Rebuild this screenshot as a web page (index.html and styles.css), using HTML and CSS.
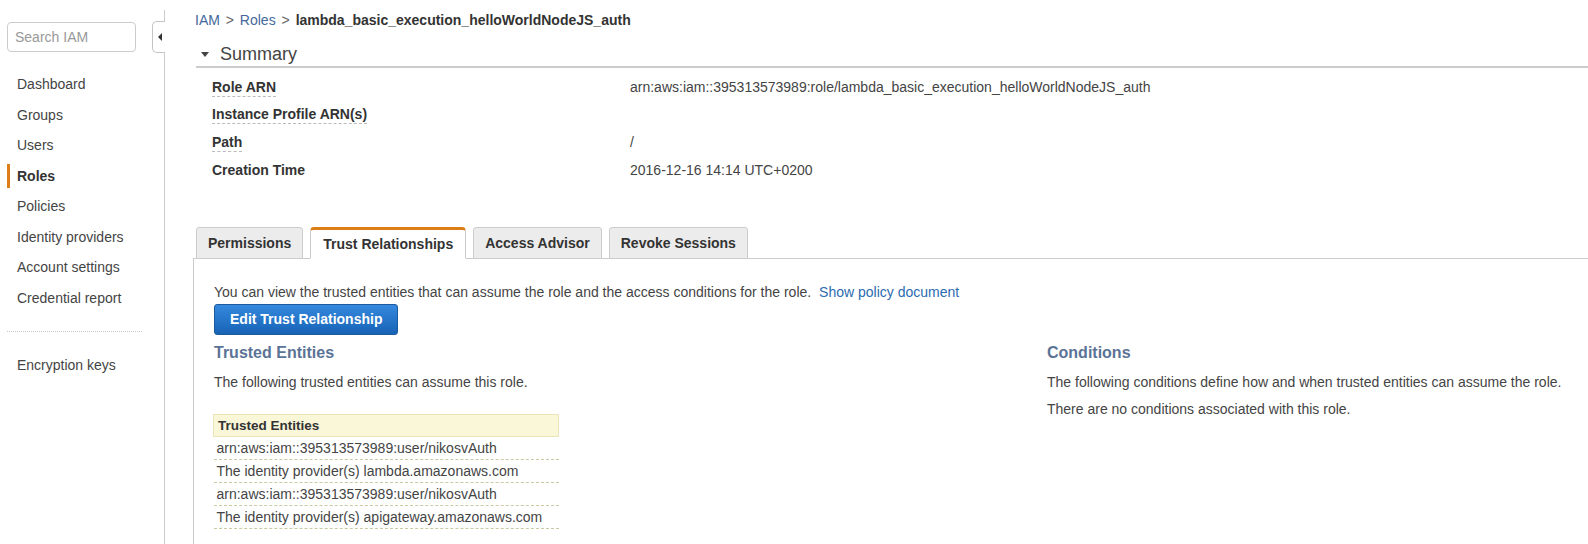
FILE: index.html
```html
<!DOCTYPE html>
<html lang="en">
<head>
    <meta charset="UTF-8">
    <title>IAM - Roles</title>
    <link rel="stylesheet" href="styles.css">
</head>
<body>

    <!-- left navigation -->
    <aside class="sidebar">
        <div class="collapse-tab"><span class="arrow"></span></div>
        <input class="search" type="text" placeholder="Search IAM">
        <ul class="nav">
            <li>Dashboard</li>
            <li>Groups</li>
            <li>Users</li>
            <li class="active">Roles</li>
            <li>Policies</li>
            <li>Identity providers</li>
            <li>Account settings</li>
            <li>Credential report</li>
        </ul>
        <div class="nav-sep"></div>
        <ul class="nav">
            <li>Encryption keys</li>
        </ul>
    </aside>

    <main class="main">
        <div class="crumbs">
            <a href="#">IAM</a> <span class="sep">&gt;</span> <a href="#">Roles</a> <span class="sep">&gt;</span>
            <b>lambda_basic_execution_helloWorldNodeJS_auth</b>
        </div>

        <h2 class="summary-title"><span class="caret"></span>Summary</h2>

        <dl class="summary">
            <dt><span>Role ARN</span></dt>
            <dd>arn:aws:iam::395313573989:role/lambda_basic_execution_helloWorldNodeJS_auth</dd>
            <dt><span>Instance Profile ARN(s)</span></dt>
            <dd></dd>
            <dt><span>Path</span></dt>
            <dd>/</dd>
            <dt>Creation Time</dt>
            <dd>2016-12-16 14:14 UTC+0200</dd>
        </dl>

        <div class="tabs">
            <div class="tab">Permissions</div>
            <div class="tab active">Trust Relationships</div>
            <div class="tab">Access Advisor</div>
            <div class="tab">Revoke Sessions</div>
        </div>

        <div class="panel">
            <p class="intro">You can view the trusted entities that can assume the role and the access conditions for the role. <a href="#">Show policy document</a></p>
            <button class="btn">Edit Trust Relationship</button>

            <div class="cols">
                <section>
                    <h3>Trusted Entities</h3>
                    <p>The following trusted entities can assume this role.</p>
                    <table class="entities">
                        <thead>
                            <tr><th>Trusted Entities</th></tr>
                        </thead>
                        <tbody>
                            <tr><td>arn:aws:iam::395313573989:user/nikosvAuth</td></tr>
                            <tr><td>The identity provider(s) lambda.amazonaws.com</td></tr>
                            <tr><td>arn:aws:iam::395313573989:user/nikosvAuth</td></tr>
                            <tr><td>The identity provider(s) apigateway.amazonaws.com</td></tr>
                        </tbody>
                    </table>
                </section>
                <section>
                    <h3>Conditions</h3>
                    <p>The following conditions define how and when trusted entities can assume the role.</p>
                    <p class="tight">There are no conditions associated with this role.</p>
                </section>
            </div>
        </div>
    </main>

</body>
</html>
```

FILE: styles.css
```css
* {
    margin: 0;
    padding: 0;
    box-sizing: border-box;
}

body {
    display: flex;
    min-height: 100vh;
    font-family: 'Liberation Sans', Arial, sans-serif;
    font-size: 14px;
    color: #444;
    background: #fff;
    overflow: hidden;
}

a {
    color: #44699b;
    text-decoration: none;
}

/* sidebar */
.sidebar {
    position: relative;
    flex: 0 0 165px;
    margin-top: 10px;
    border-right: 1px solid #ccc;
}

.collapse-tab {
    position: absolute;
    top: 11px;
    right: -1px;
    width: 13px;
    height: 32px;
    border: 1px solid #c4c4c4;
    border-right: none;
    border-radius: 5px 0 0 5px;
    background: #fff;
}

.collapse-tab .arrow {
    position: absolute;
    top: 11px;
    left: 5px;
    border-top: 4px solid transparent;
    border-bottom: 4px solid transparent;
    border-right: 4px solid #333;
}

.search {
    display: block;
    margin: 12px 0 0 7px;
    width: 129px;
    height: 30px;
    padding: 0 7px;
    border: 1px solid #ccc;
    border-radius: 4px;
    font-family: inherit;
    font-size: 14px;
    color: #444;
}

.search::placeholder {
    color: #999;
}

.nav {
    list-style: none;
    margin-top: 17px;
}

.nav li {
    position: relative;
    height: 30.57px;
    padding-left: 17px;
    line-height: 30px;
    color: #444;
}

.nav li.active {
    font-weight: bold;
    color: #333;
}

.nav li.active::before {
    content: "";
    position: absolute;
    left: 7px;
    top: 3px;
    bottom: 3px;
    width: 3px;
    background: #dd7d16;
}

.nav-sep {
    margin: 17px 0 0 7px;
    width: 135px;
    border-top: 1px dotted #c8c8c8;
}

.nav-sep + .nav {
    margin-top: 18px;
}

/* main area */
.main {
    flex: 1;
    padding: 10px 0 0 30px;
    min-width: 0;
}

.crumbs {
    line-height: 20px;
}

.crumbs .sep {
    color: #666;
    margin: 0 2px;
}

.crumbs b {
    color: #333;
}

.summary-title {
    margin-top: 13px;
    padding: 0 0 1px 24px;
    position: relative;
    font-size: 18px;
    font-weight: normal;
    line-height: 22px;
    color: #444;
    border-bottom: 2px solid #ccc;
    margin-left: 1px;
}

.summary-title .caret {
    position: absolute;
    left: 5px;
    top: 9px;
    border-left: 4px solid transparent;
    border-right: 4px solid transparent;
    border-top: 5px solid #444;
}

.summary {
    display: grid;
    grid-template-columns: 418px 1fr;
    grid-auto-rows: 27.67px;
    align-items: center;
    margin-top: 5px;
    padding-left: 17px;
}

.summary dt {
    font-weight: bold;
    color: #333;
}

.summary dt span {
    border-bottom: 1px dashed #bbb;
    padding-bottom: 1px;
}

.summary dd {
    color: #444;
}

/* tabs */
.tabs {
    display: flex;
    gap: 7px;
    margin-top: 43px;
    padding-left: 1px;
    margin-left: -2px;
    border-bottom: 1px solid #ccc;
}

.tab {
    height: 32px;
    line-height: 30px;
    padding: 0 11px;
    margin-bottom: -1px;
    border: 1px solid #ccc;
    border-radius: 3px 3px 0 0;
    background: #ececec;
    font-weight: bold;
    color: #333;
}

.tab:first-child {
    margin-left: 2px;
}

.tab.active {
    background: #fff;
    border-top: 3px solid #dd7d16;
    border-bottom-color: #fff;
    line-height: 28px;
    padding: 0 12px;
    border-radius: 4px 4px 0 0;
}

.panel {
    margin-left: -2px;
    border-left: 1px solid #ccc;
    padding: 23px 0 20px 20px;
    min-height: 300px;
}

.intro {
    line-height: 20px;
}

.intro a {
    margin-left: 4px;
    color: #2b6cb0;
}

.btn {
    margin-top: 2px;
    height: 31px;
    padding: 0 15px;
    border: 1px solid #1b5a9c;
    border-radius: 3px;
    background: linear-gradient(#3589de, #1763b6);
    color: #fff;
    font-family: inherit;
    font-size: 14px;
    font-weight: bold;
}

.cols {
    display: grid;
    grid-template-columns: 833px 1fr;
    margin-top: 8px;
}

.cols h3 {
    font-size: 16px;
    line-height: 20px;
    color: #5a7396;
}

.cols p {
    margin-top: 9px;
    line-height: 20px;
    white-space: nowrap;
}

.cols p.tight {
    margin-top: 7px;
}

.entities {
    margin-top: 22px;
    margin-left: -1px;
    width: 346px;
    border-collapse: collapse;
}

.entities th {
    height: 22px;
    padding: 0 4px;
    text-align: left;
    font-size: 13.5px;
    color: #333;
    background: #faf7d9;
    border: 1px solid #ebe6b9;
}

.entities td {
    height: 23px;
    padding: 0 3px;
    border-bottom: 1px dashed #cbc9a1;
    white-space: nowrap;
}
```
